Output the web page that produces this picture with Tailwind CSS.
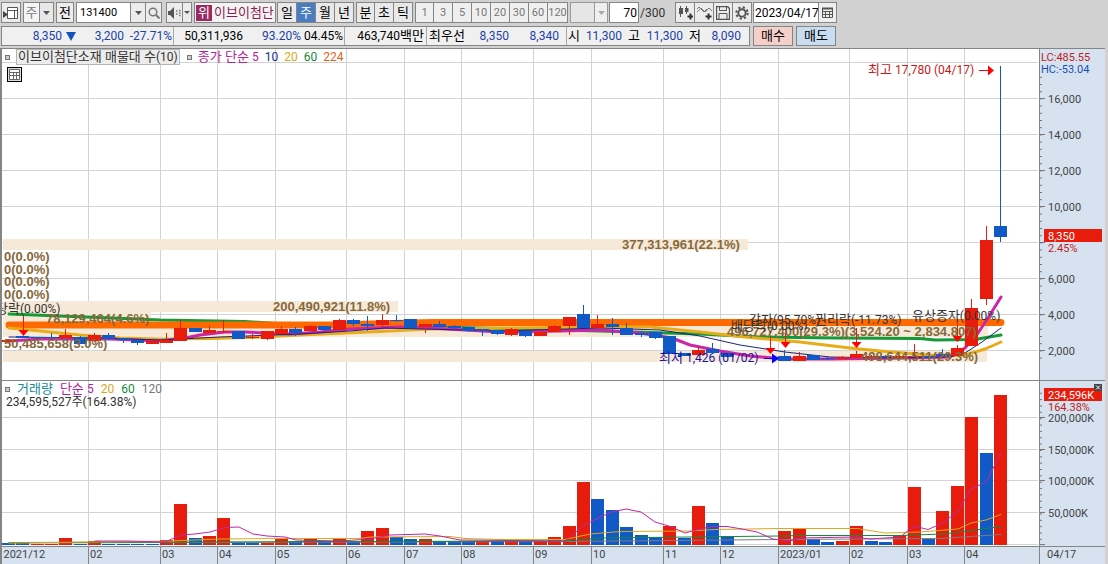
<!DOCTYPE html>
<html lang="ko">
<head>
<meta charset="utf-8">
<title>이브이첨단소재 주봉 차트</title>
<script src="https://cdn.jsdelivr.net/npm/@tailwindcss/browser@4"></script>
</head>
<body class="min-h-screen bg-[#d1d1d1] font-['Roboto','Noto_Sans_CJK_KR',sans-serif] text-[12px] leading-4 text-black">
<header class="flex flex-col gap-[3px] pt-[2px] pb-[2px]">
  <div class="flex h-[21px] items-stretch gap-[2px] pl-px text-[13px]" role="toolbar" aria-label="차트 도구">
    <button aria-label="창 목록" class="flex w-5 items-center justify-center border border-[#858585] bg-[#ececec]">
      <svg width="16" height="14" viewBox="0 0 16 14"><path d="M4.500 1.500h10v11h-10zM4.500 4.500h10M11.500 4v8" fill="#fff" stroke="#555"/><path d="M0 5l5 3.500L0 12z" fill="#444"/></svg>
    </button>
    <div class="flex border border-[#858585] bg-[#f4f4f4]">
      <span class="flex w-[15px] items-center justify-center text-[#777]">주</span>
      <button aria-label="주기 선택" class="flex w-[14px] items-center justify-center border-l border-[#858585] bg-[#e8e8e8]"><svg width="7" height="4"><path d="M0 0h7L3.500 4z" fill="#555"/></svg></button>
    </div>
    <button class="w-[18px] border border-[#858585] bg-[#ececec]">전</button>
    <div class="flex border border-[#858585] bg-white">
      <input aria-label="종목코드" value="131400" class="w-[53px] bg-white pl-[3px] text-[11px] outline-none">
      <button aria-label="종목 목록" class="flex w-[15px] items-center justify-center border-l border-[#858585] bg-[#ececec]"><svg width="7" height="4"><path d="M0 0h7L3.500 4z" fill="#555"/></svg></button>
      <button aria-label="종목 검색" class="flex w-4 items-center justify-center border-l border-[#858585] bg-[#ececec]"><svg width="12" height="12" viewBox="0 0 12 12" fill="none" stroke="#777"><circle cx="5" cy="5" r="3.800" stroke-width="1.500"/><path d="M8 8l3.500 3.500" stroke-width="2"/></svg></button>
    </div>
    <div class="ml-[2px] flex border border-[#858585] bg-[#ececec]">
      <button aria-label="음성" class="flex w-[15px] items-center justify-center"><svg width="13" height="12" viewBox="0 0 13 12"><path d="M0 4h2l4-4v12L2 8H0z" fill="#555"/><path d="M8 4h1.500M8 7h1.500M11 3.500h1.500M11 6h1.500M11 8.500h1.500" stroke="#777" stroke-width="1.500"/></svg></button>
      <button aria-label="음성 설정" class="flex w-[9px] items-center justify-center border-l border-[#858585]"><svg width="6" height="3"><path d="M0 0h6L3 3z" fill="#555"/></svg></button>
    </div>
    <div class="flex w-[82px] items-center gap-[2px] overflow-hidden border border-[#858585] bg-[#f4f4f4] pl-px whitespace-nowrap">
      <span class="flex h-4 w-4 shrink-0 items-center justify-center bg-[#9c2a62] text-white">위</span>
      <span class="text-[#8c1c50]">이브이첨단</span>
    </div>
    <div class="-ml-px flex divide-x divide-[#858585] border border-[#858585] bg-[#e9e9e9]">
      <button class="w-[19px]">일</button><button class="w-[19px] bg-[#4a7dbf] text-white">주</button><button class="w-[19px]">월</button><button class="w-[18px]">년</button>
    </div>
    <div class="flex divide-x divide-[#858585] border border-[#858585] bg-[#e9e9e9]">
      <button class="w-[18px]">분</button><button class="w-[19px]">초</button><button class="w-[18px]">틱</button>
    </div>
    <div class="flex divide-x divide-[#858585] border border-[#858585] bg-[#efefef] text-[11px] text-[#777]">
      <button class="w-[18px]">1</button><button class="w-[19px]">3</button><button class="w-[19px]">5</button><button class="w-[19px]">10</button><button class="w-[19px]">20</button><button class="w-[19px]">30</button><button class="w-[19px]">60</button><button class="w-[19px]">120</button>
    </div>
    <div class="flex border border-[#999] bg-[#e6e6e6]">
      <span class="w-[23px]"></span>
      <button aria-label="분 단위 선택" class="flex w-[13px] items-center justify-center border-l border-[#999] bg-[#efefef]"><svg width="7" height="4"><path d="M0 0h7L3.500 4z" fill="#aaa"/></svg></button>
    </div>
    <div class="-ml-px flex items-center text-[12px]">
      <input aria-label="표시 개수" value="70" class="h-full w-[30px] border border-[#858585] bg-white pr-px text-right outline-none">
      <span class="w-[34px] pl-px text-[#333]">/300</span>
    </div>
    <div class="flex divide-x divide-[#858585] border border-[#858585] bg-[#ececec]">
      <button aria-label="종목 추가" class="flex w-[19px] items-center justify-center"><svg width="15" height="14" viewBox="0 0 15 14"><path d="M2.500 0v11M8.500 0v8" stroke="#555"/><path d="M1 2h4v6H1zM7 2h3.500v4H7z" fill="#555"/><path d="M12.500 7.500v6M9.500 10.500h5.500" stroke="#333" stroke-width="2"/></svg></button>
      <button aria-label="지표 추가" class="flex w-[19px] items-center justify-center"><svg width="15" height="14" viewBox="0 0 15 14" fill="none"><path d="M0 6l4-4 4 4 4-4 3 3M0 3l2-2 5 5 3-3" stroke="#777"/><path d="M11.500 7.500v6M8.500 10.500h6" stroke="#333" stroke-width="2"/></svg></button>
      <button aria-label="저장" class="flex w-[19px] items-center justify-center"><svg width="14" height="14" viewBox="0 0 14 14" fill="none" stroke="#555"><path d="M.5.500h11l2 2v11H.5z" stroke-width="1.300"/><path d="M3.500.500v4h7v-4M3 13V7.500h8V13"/></svg></button>
      <button aria-label="설정" class="flex w-[18px] items-center justify-center"><svg width="14" height="14" viewBox="0 0 14 14" fill="none" stroke="#555"><circle cx="7" cy="7" r="3.700" stroke-width="2"/><circle cx="7" cy="7" r="5.700" stroke-width="2" stroke-dasharray="2.200 2.280"/></svg></button>
    </div>
    <div class="-ml-px flex border border-[#858585] bg-white text-[12px]">
      <input aria-label="기준일" value="2023/04/17" class="w-16 bg-white pl-px outline-none">
      <button aria-label="달력" class="flex w-[18px] items-center justify-center border-l border-[#858585] bg-[#efefef]"><svg width="11" height="11" viewBox="0 0 11 11" fill="none" stroke="#555"><path d="M.5 1.500h10v9H.5zM.5 4.500h10M.5 7.500h10M3.500 4v6M7.500 4v6"/><path d="M0 1.500h11" stroke-width="2"/></svg></button>
    </div>
  </div>
  <div class="flex h-5 gap-[3px] pl-px">
    <div class="flex items-center border border-[#858585] bg-[#f0f0f0] whitespace-nowrap text-[#1a43a8]">
      <div class="flex h-full w-[172px] items-center justify-end border-r border-[#a8a8a8] pr-px">
        <span>8,350</span><svg class="ml-1" width="10" height="9"><path d="M0 0h10L5 9z" fill="#1450c0"/></svg>
        <span class="w-12 text-right">3,200</span><span class="w-12 text-right">-27.71%</span>
      </div>
      <div class="flex h-full w-[171px] items-center justify-end border-r border-[#a8a8a8] pr-px">
        <span class="text-black">50,311,936</span><span class="w-[58px] text-right">93.20%</span><span class="w-[42px] text-right text-black">04.45%</span>
      </div>
      <div class="flex h-full w-[82px] items-center justify-end border-r border-[#a8a8a8] pr-[2px] text-black">463,740<span class="text-[13px]">백만</span></div>
      <div class="flex h-full w-[140px] items-center border-r border-[#a8a8a8]">
        <span class="pl-[2px] text-[13px] text-black">최우선</span><span class="w-11 text-right">8,350</span><span class="w-[50px] text-right">8,340</span>
      </div>
      <div class="flex h-full w-[182px] items-center">
        <span class="pl-px text-[13px] text-black">시</span><span class="w-[42px] text-right">11,300</span><span class="pl-[6px] text-[13px] text-black">고</span><span class="w-[43px] text-right">11,300</span><span class="pl-[6px] text-[13px] text-black">저</span><span class="w-10 text-right">8,090</span>
      </div>
    </div>
    <button class="w-10 border border-[#858585] bg-[#f5cfca] text-[13px]">매수</button>
    <button class="w-10 border border-[#858585] bg-[#c9ddf0] text-[13px]">매도</button>
  </div>
</header>

<main class="mr-[3px] grid grid-cols-[minmax(0,1fr)_66px] border-t border-l-2 border-[#858585] bg-white">
  <section class="relative" aria-label="가격 차트">
    <svg id="price" class="block h-auto w-full" viewBox="2 49 1037 331"></svg>
    <div class="absolute top-0 left-0 flex items-center gap-[6px] pl-[3px] text-[13px] whitespace-nowrap">
      <i class="h-[5px] w-[5px] border border-[#777] bg-[#ccc]"></i>
      <span class="border border-[#b5b5b5] bg-[#ececec] px-px leading-[14px] text-[#333]">이브이첨단소재 매물대 수<span class="text-[12px]">(10)</span></span>
      <i class="ml-px h-[5px] w-[5px] border border-[#777] bg-[#ccc]"></i>
      <span class="text-[#b3229c]">종가 단순 <span class="text-[12px]">5</span></span>
      <span class="text-[12px] text-[#132c8c]">10</span><span class="text-[12px] text-[#d8a81c]">20</span><span class="text-[12px] text-[#15883a]">60</span><span class="text-[12px] text-[#e0621a]">224</span>
    </div>
    <button aria-label="표 보기" class="absolute top-[18px] left-[5px] h-[15px] w-[15px] border border-black bg-[#ddd] p-px"><svg width="11" height="11" fill="#fff" stroke="#666"><path d="M.5.500h10v10H.5zM.5 3.500h10M.5 6.500h10M4.500 3v8M7.500 3v8"/></svg></button>
  </section>
  <svg id="priceAxis" class="block h-full w-full border-l border-[#858585] bg-[#d6e2f0] text-[11px]" viewBox="1040 49 65 331"></svg>

  <section class="relative border-t border-[#858585]" aria-label="거래량 차트">
    <svg id="volume" class="block h-auto w-full" viewBox="2 381 1037 165"></svg>
    <div class="absolute top-0 left-0 flex items-center gap-[7px] pl-[3px] text-[13px] whitespace-nowrap">
      <i class="h-[5px] w-[5px] border border-[#777] bg-[#ccc]"></i>
      <span class="text-[#178a92]">거래량</span><span class="text-[#b3229c]">단순 <span class="text-[12px]">5</span></span><span class="text-[12px] text-[#d8a81c]">20</span><span class="text-[12px] text-[#15883a]">60</span><span class="text-[12px] text-[#777]">120</span>
    </div>
    <p class="absolute top-[13px] left-1 whitespace-nowrap text-[#333]">234,595,527주(164.38%)</p>
  </section>
  <svg id="volumeAxis" class="block h-full w-full border-t border-l border-[#858585] bg-[#d6e2f0] text-[11px]" viewBox="1040 381 65 165"></svg>

  <svg id="dates" class="block h-auto w-full border-t border-[#858585] bg-[#d6e2f0] text-[11px]" viewBox="2 547 1037 17"></svg>
  <div class="border-t border-l border-[#858585] bg-[#d6e2f0] pl-[7px] text-[11px] leading-[15px] text-[#444]">04/17</div>
</main>

<script>
const RED = '#e81c0c', BLUE = '#1259c8', GRID = '#d2d2d2', BAND = '#f6e9d8';
const cx = i => 1001 - (69 - i) * 14.38;
const line = (x1, y1, x2, y2, c, w = 1) => `<path d="M${x1} ${y1}L${x2} ${y2}" stroke="${c}" stroke-width="${w}"/>`;
const rect = (x, y, w, h, c) => `<rect x="${x}" y="${y}" width="${w}" height="${h}" fill="${c}" shape-rendering="crispEdges"/>`;
const poly = (p, c, w) => `<polyline points="${p}" fill="none" stroke="${c}" stroke-width="${w}" stroke-linecap="round" stroke-linejoin="round"/>`;
const text = (x, y, s, c) => `<text x="${x}" y="${y}" fill="${c}">${s.replace(/[가-힣]+/g, '<tspan class="text-[13px]">$&</tspan>')}</text>`;
const label = (x, y, s) => `<text x="${x}" y="${y}" fill="#86683a" class="font-['Liberation_Sans'] text-[13px] font-bold">${s}</text>`;
const put = (id, s) => { document.getElementById(id).innerHTML = s; };

const months = [[2,'2021/12'],[88.5,'02'],[160.5,'03'],[217.5,'04'],[275.5,'05'],[346.5,'06'],[404.5,'07'],[461.5,'08'],[533.5,'09'],[591.5,'10'],[663.5,'11'],[720.5,'12'],[778.5,'2023/01'],[849.5,'02'],[907.5,'03'],[964.5,'04']];
const vgrid = (a, b) => months.slice(1).map(m => line(m[0], a, m[0], b, GRID)).join('');

/* index, colour, body top, body bottom, wick top, wick bottom */
const candles = [
[0,'r',340,342,340,342],[1,'b',336,338,336,338],[2,'b',337,338,337,339],[3,'b',337,338,333,339],[4,'r',335,338,329,338],[5,'b',337,344,336,344],[6,'r',335,341,333,342],[7,'b',335,339,333,340],[8,'b',338,340,338,343],[9,'b',340,343,340,345],[10,'r',341,344,340,344],[11,'r',340,343,333,343],[12,'r',328,341,319,341],[13,'b',328,332,328,332],[14,'r',330,333,326,333],[15,'r',331,332,320,333],[16,'b',331,339,331,339],[17,'r',337,338,334,339],[18,'r',331,339,331,340],[19,'r',329,334,326,334],[20,'b',329,333,327,336],[21,'r',326,331,325,331],[22,'b',326,330,326,332],[23,'r',320,330,319,330],[24,'b',320,324,319,326],[25,'b',324,326,316,331],[26,'r',320,325,314,327],[27,'b',320,321,315,322],[28,'b',319,328,319,329],[29,'r',324,327,324,333],[30,'b',324,327,321,327],[31,'b',326,328,325,330],[32,'b',327,331,327,332],[33,'b',329,331,329,336],[34,'b',330,334,330,335],[35,'r',329,335,328,336],[36,'b',331,336,329,337],[37,'r',332,336,330,336],[38,'r',326,332,325,332],[39,'r',317,326,317,335],[40,'b',314,328,305,328],[41,'r',324,328,315,328],[42,'b',324,327,318,335],[43,'b',328,335,323,335],[44,'b',333,335,331,337],[45,'b',332,338,332,339],[46,'b',336,354,336,354],[47,'b',353,356,353,356],[48,'r',350,355,346,356],[49,'b',349,353,343,353],[50,'b',353,357,353,357],
[54,'b',356,361,350,361],[55,'r',356,361,352,361],[56,'b',355,360,355,360],[57,'b',358,359,357,360],[58,'r',357,359,356,359],[59,'r',354,358,351,358],[60,'r',356,358,355,358],[61,'b',356,357,355,358],[62,'r',356,358,355,358],[63,'r',356,357,344,357],[64,'b',356,358,356,358],[65,'b',354,356,349,357],[66,'r',348,356,345,356],[67,'r',308,346,299,346],[68,'r',240,299,226,305],[69,'b',226,237,66,242]];

const down = (x, top, tip) => line(x, top, x, tip - 5, RED) + `<path d="M${x - 5} ${tip - 6}h10l-5 6z" fill="#f00"/>`;
const DARK = '#333', CR = '#c41a1a';
let s = vgrid(49, 380);
for (let y = 62.5; y < 360; y += 36) s += line(2, y, 1038, y, GRID);
s += rect(3,239,745,11,BAND) + rect(3,301,395,11,BAND) + rect(3,312,148,13,BAND) + rect(3,326,985,11,BAND) + rect(3,351,984,11,BAND);
s += poly('9,314 60,316 100,317.500 160,320 245,321.500 300,325 433,327 505,328.500 560,330 600,331 700,334 760,337 835,338 920,338.500 935,340 975,339.500 1001,335','#159a38',3);
s += poly('9,325 332,325 433,322.500 1001,322.500','#ff6a00',7);
s += poly('9,328 30,330 50,332 80,335 120,338 160,339 210,338.500 262,337 300,335 345,333 390,331 430,329 500,328 590,327 650,327 700,332 745,337 800,342 850,348 880,351 940,356 965,355 985,349 1001,342','#e8ac18',3);
s += poly('9,341 40,339 80,339 110,339 160,341 185,338 200,335 225,332 245,332 290,334 320,332 350,329 400,327 430,328 500,332 560,331 600,330 640,333 672,338 690,345 720,351 750,356 785,359 830,359 900,358 950,357 965,348 978,333 988,318 1001,297','#cb26a8',3);
s += poly('9,337 100,338 160,340 220,337 300,334 350,331 385,328 500,331 600,328 660,330 700,336 740,345 785,352 830,357 900,358 950,357 965,353 982,342 1001,328','#18267e',1);
for (const [i, k, a, b, w1, w2] of candles) {
  const c = k === 'r' ? RED : BLUE, x = Math.round(cx(i));
  s += rect(x - 1, w1, 1, w2 - w1, c) + rect(x - 7, a, 13, b - a, c);
}
s += down(23.5,316,336) + down(770.5,336,354) + down(785.5,330,348) + down(856.5,328,348) + down(957.5,322,342);
s += label(4,261,'0(0.0%)') + label(4,274,'0(0.0%)') + label(4,286,'0(0.0%)') + label(4,299,'0(0.0%)');
s += label(622,249,'377,313,961(22.1%)') + label(273,311,'200,490,921(11.8%)') + label(46,323,'78,129,464(4.6%)') + label(4,348,'50,485,658(3.0%)');
s += label(727,336,'496,727,400(29.3%)(3,524.20 ~ 2,834.807)') + label(861,361,'498,644,511(29.3%)');
s += text(-4,313,'당락(0.00%)',DARK) + text(749,324,'감자(95.70%)',DARK) + text(815,324,'권리락(-11.73%)',DARK) + text(731,330,'배당락(0.00%)',DARK) + text(912,320,'유상증자(0.00%)',DARK);
s += text(659,362,'최저 1,426 (01/02)','#1414a0') + text(868,74,'최고 17,780 (04/17)',CR);
s += line(979,70.5,989,70.5,'#f00') + '<path d="M988 65.500v10l6-5z" fill="#f00"/>' + line(764,358.5,773,358.5,'#00f') + '<path d="M772 353.500v10l7-5z" fill="#00f"/>';
put('price', s);

s = '';
for (let k = 0; k < 40; k++) { const y = 77.3 + k * 7.2; if (y < 360) s += line(1040, y, 1042, y, '#777'); }
for (let k = 0; k < 8; k++) {
  const y = 98.5 + k * 36;
  s += line(1040, y, 1045, y, '#777');
  if (k !== 4) s += text(1048, y + 4, (16 - 2 * k) + ',000', '#444');
}
s += text(1041,61,'LC:485.55',CR) + text(1041,73,'HC:-53.04','#1a4fb0') + rect(1044,229,58,13,RED) + text(1048,240,'8,350','#fff') + text(1048,252,'2.45%',CR);
put('priceAxis', s);

/* bar tops, one per week; a 0 marks a week without trading */
const tops = [543,543,544,544,538,543.5,541,544,544,543.5,544,540,504,538,536,518,543,543,543,539,541,539,541,538,542,531,528,537,539,539,541,541,541,541,541,541,541,541,537,526,482,499,510,527,535,537,526,538,506,523,536,0,0,0,531,529,539,542,541,526,541,542,535,487,539,511,486,417,453,395];
const cols = 'bbrrrbrbbbbrrbrrbbrrbrbrbrrbbrbbbrbrbrrrrbbbbbrbrbb...rrbbrrbbrrbrrrbr';
s = vgrid(381, 546);
[417.5,449.5,480.5,512.5,544.5].forEach(y => s += line(2, y, 1038, y, GRID));
tops.forEach((t, i) => { if (t) s += rect(Math.round(cx(i)) - 7, t, 13, 545 - t, cols[i] === 'r' ? RED : BLUE); });
s += poly('9,543 565,541.500 780,539.500 940,538.500 1001,534.500','#7d7d7d',1);
s += poly('9,542.500 565,541 600,538 780,536 800,535.500 900,535.500 943,534 971,530.500 1001,526.500','#15883a',1);
s += poly('9,543 170,541 220,539 280,538.500 360,538.500 370,537 450,536.500 465,538.500 500,539.500 565,539.500 590,534 620,531.500 690,531 715,529.500 780,528.500 857,528.500 885,533 920,532 958,529 971,523 986,520 1001,514.500','#dba81e',1);
s += poly('95,541 127,541 165,542 181,535 195,534 210,532 225,527.500 239,527 253,534 267,536 285,537 296,540 340,541 370,539 390,535 425,534 440,536 460,540 565,541 583,526 600,517 612,512 626,509 641,512 655,522 672,527 685,533 700,529 712,526.500 727,526.500 742,529 757,532 773,539 790,541 800,538 855,537 870,539 900,537 914,526 928,529.500 943,523 958,511 971,489 986,482 1001,453','#c026a8',1);
put('volume', s);

s = '';
for (let y = 393.3; y < 545; y += 6.35) s += line(1040, y, 1042, y, '#777');
[[417.5,'200,000K'],[449.5,'150,000K'],[480.5,'100,000K'],[512.5,'50,000K'],[544.5,'']].forEach(([y, t]) => s += line(1040, y, 1045, y, '#777') + text(1048, y + 4, t, '#444'));
s += rect(1047,401,55,11,'#d6e2f0') + text(1048,411,'164.38%',CR) + rect(1044,388,58,13,RED) + text(1048,399,'234,596K','#fff');
s += rect(1094,384,8,7,'#444') + '<path d="M1096 385.500l4 4m0-4l-4 4" stroke="#fff"/>';
put('volumeAxis', s);

put('dates', months.map(([x, t]) => (x > 2 ? line(x, 547, x, 564, '#858585') : '') + text(x + 1.5, 558, t, '#444')).join(''));
</script>
</body>
</html>
